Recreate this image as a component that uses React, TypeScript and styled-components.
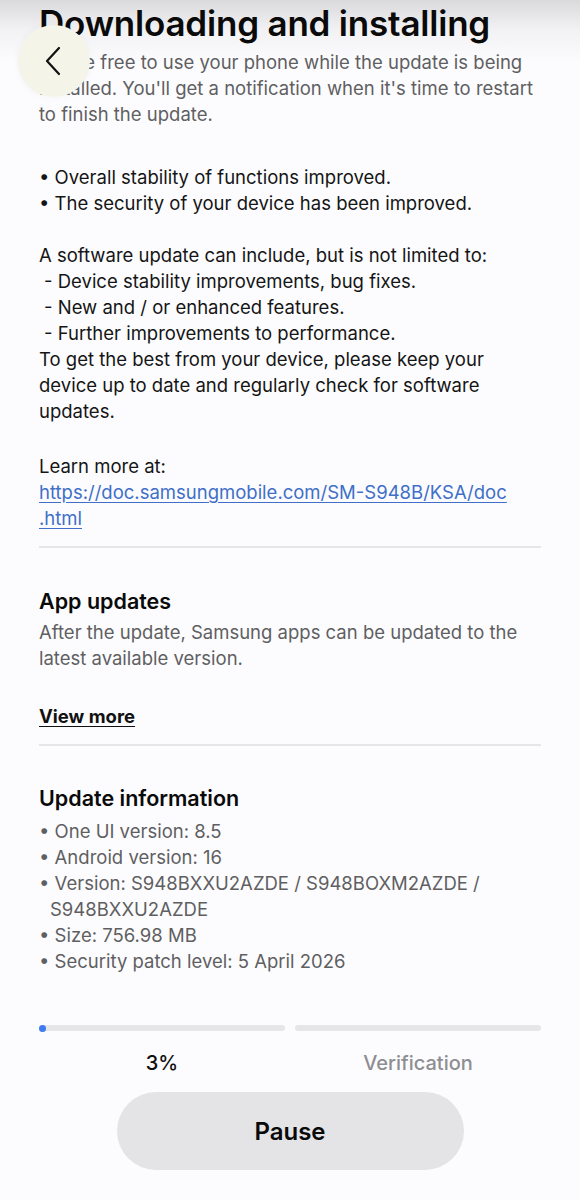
import React from 'react';
import styled, { createGlobalStyle } from 'styled-components';

const GlobalStyle = createGlobalStyle`
  html, body {
    margin: 0;
    padding: 0;
    background: #fcfcfe;
  }
  body {
    font-family: Inter, Roboto, "Noto Sans", sans-serif;
    color: #111;
  }
`;

const Screen = styled.div`
  position: relative;
  width: 580px;
  height: 1200px;
  overflow: hidden;
  background: linear-gradient(to bottom, #dadadc 0px, #f2f2f4 30px, #fcfcfe 62px) no-repeat, #fcfcfe;
`;

const BackButton = styled.button`
  position: absolute;
  left: 18px;
  top: 25px;
  width: 72px;
  height: 72px;
  border-radius: 50%;
  border: none;
  background: #f4f4e8;
  box-shadow: 0 0 8px rgba(0, 0, 0, 0.04);
  display: flex;
  align-items: center;
  justify-content: center;
  padding: 0;
  svg {
    margin-left: -2px;
  }
`;

const Content = styled.div`
  padding: 0 39px;
  margin-top: 2px;
`;

const Title = styled.h1`
  margin: 0;
  font-size: 35px;
  font-weight: 600;
  line-height: 42px;
  letter-spacing: -0.2px;
  color: #0a0a0a;
`;

const Paragraph = styled.p<{ $muted?: boolean; $gap?: number }>`
  margin: ${(p) => p.$gap ?? 0}px 0 0;
  font-size: 18.5px;
  line-height: 26px;
  color: ${(p) => (p.$muted ? '#5f5f62' : '#151515')};
`;

const Indent = styled.span`
  padding-left: 5px;
`;

const Link = styled.a`
  display: block;
  color: #3f6fc8;
  text-decoration: underline;
  text-underline-offset: 3px;
`;

const Divider = styled.hr`
  border: none;
  height: 2px;
  background: #e6e6e8;
  margin: 0;
`;

const SectionTitle = styled.h2`
  margin: 0;
  font-size: 21.5px;
  font-weight: 600;
  line-height: 30px;
  color: #0a0a0a;
`;

const ViewMore = styled.a`
  display: inline-block;
  font-size: 18.5px;
  font-weight: 700;
  line-height: 26px;
  color: #111;
  text-decoration: underline;
  text-underline-offset: 3px;
`;

const InfoList = styled.ul`
  list-style: none;
  padding: 0;
  margin: 5px 0 0;
`;

const InfoItem = styled.li`
  font-size: 18.5px;
  line-height: 26px;
  color: #5f5f62;
  padding-left: 11px;
  text-indent: -11px;
`;

const ProgressRow = styled.div`
  display: grid;
  grid-template-columns: 1fr 1fr;
  column-gap: 10px;
  padding: 0 39px;
  margin-top: 51px;
`;

const Track = styled.div`
  height: 6px;
  border-radius: 3px;
  background: #e6e6e8;
`;

const Fill = styled.div`
  height: 7px;
  margin-top: -0.5px;
  min-width: 7px;
  border-radius: 4px;
  background: #3e7bf0;
`;

const StepLabel = styled.div<{ $active?: boolean }>`
  text-align: center;
  font-size: 20px;
  font-weight: 500;
  line-height: 26px;
  margin-top: 19px;
  color: ${(p) => (p.$active ? '#111' : '#8e8e92')};
`;

const ButtonRow = styled.div`
  display: flex;
  justify-content: center;
  margin-top: 16px;
`;

const PauseButton = styled.button`
  width: 347px;
  height: 78px;
  border: none;
  border-radius: 39px;
  background: #e4e4e6;
  font-family: inherit;
  font-size: 24px;
  font-weight: 600;
  color: #0a0a0a;
`;

const Section = styled.div<{ $top: number }>`
  margin-top: ${(p) => p.$top}px;
`;

const info = [
  '• One UI version: 8.5',
  '• Android version: 16',
  '• Version: S948BXXU2AZDE / S948BOXM2AZDE / S948BXXU2AZDE',
  '• Size: 756.98 MB',
  '• Security patch level: 5 April 2026',
];

const progress = 3;

export default function App() {
  return (
    <Screen>
      <GlobalStyle />
      <Content>
        <Title>Downloading and installing</Title>
        <Paragraph $muted $gap={5}>
          You're free to use your phone while the update is being installed. You'll get a
          notification when it's time to restart to finish the update.
        </Paragraph>
        <Paragraph $gap={37}>
          • Overall stability of functions improved.
          <br />• The security of your device has been improved.
        </Paragraph>
        <Paragraph $gap={26}>
          A software update can include, but is not limited to:
          <br />
          <Indent>- Device stability improvements, bug fixes.</Indent>
          <br />
          <Indent>- New and / or enhanced features.</Indent>
          <br />
          <Indent>- Further improvements to performance.</Indent>
          <br />To get the best from your device, please keep your device up to date and
          regularly check for software updates.
        </Paragraph>
        <Paragraph $gap={29}>
          Learn more at:
          <Link href="#">
            https://doc.samsungmobile.com/SM-S948B/KSA/doc<wbr />.html
          </Link>
        </Paragraph>
        <Section $top={15}>
          <Divider />
        </Section>
        <Section $top={38}>
          <SectionTitle>App updates</SectionTitle>
          <Paragraph $muted $gap={3}>
            After the update, Samsung apps can be updated to the latest available version.
          </Paragraph>
        </Section>
        <Section $top={32}>
          <ViewMore href="#">View more</ViewMore>
        </Section>
        <Section $top={15}>
          <Divider />
        </Section>
        <Section $top={37}>
          <SectionTitle>Update information</SectionTitle>
          <InfoList>
            {info.map((line) => (
              <InfoItem key={line}>{line}</InfoItem>
            ))}
          </InfoList>
        </Section>
      </Content>
      <ProgressRow>
        <Track>
          <Fill style={{ width: `${progress}%` }} />
        </Track>
        <Track />
        <StepLabel $active>{progress}%</StepLabel>
        <StepLabel>Verification</StepLabel>
      </ProgressRow>
      <ButtonRow>
        <PauseButton>Pause</PauseButton>
      </ButtonRow>
      <BackButton aria-label="Back">
        <svg width="20" height="30" viewBox="0 0 20 30" fill="none">
          <path d="M16 2 L4 15 L16 28" stroke="#111" strokeWidth="2.2" strokeLinecap="round" strokeLinejoin="round" />
        </svg>
      </BackButton>
    </Screen>
  );
}
